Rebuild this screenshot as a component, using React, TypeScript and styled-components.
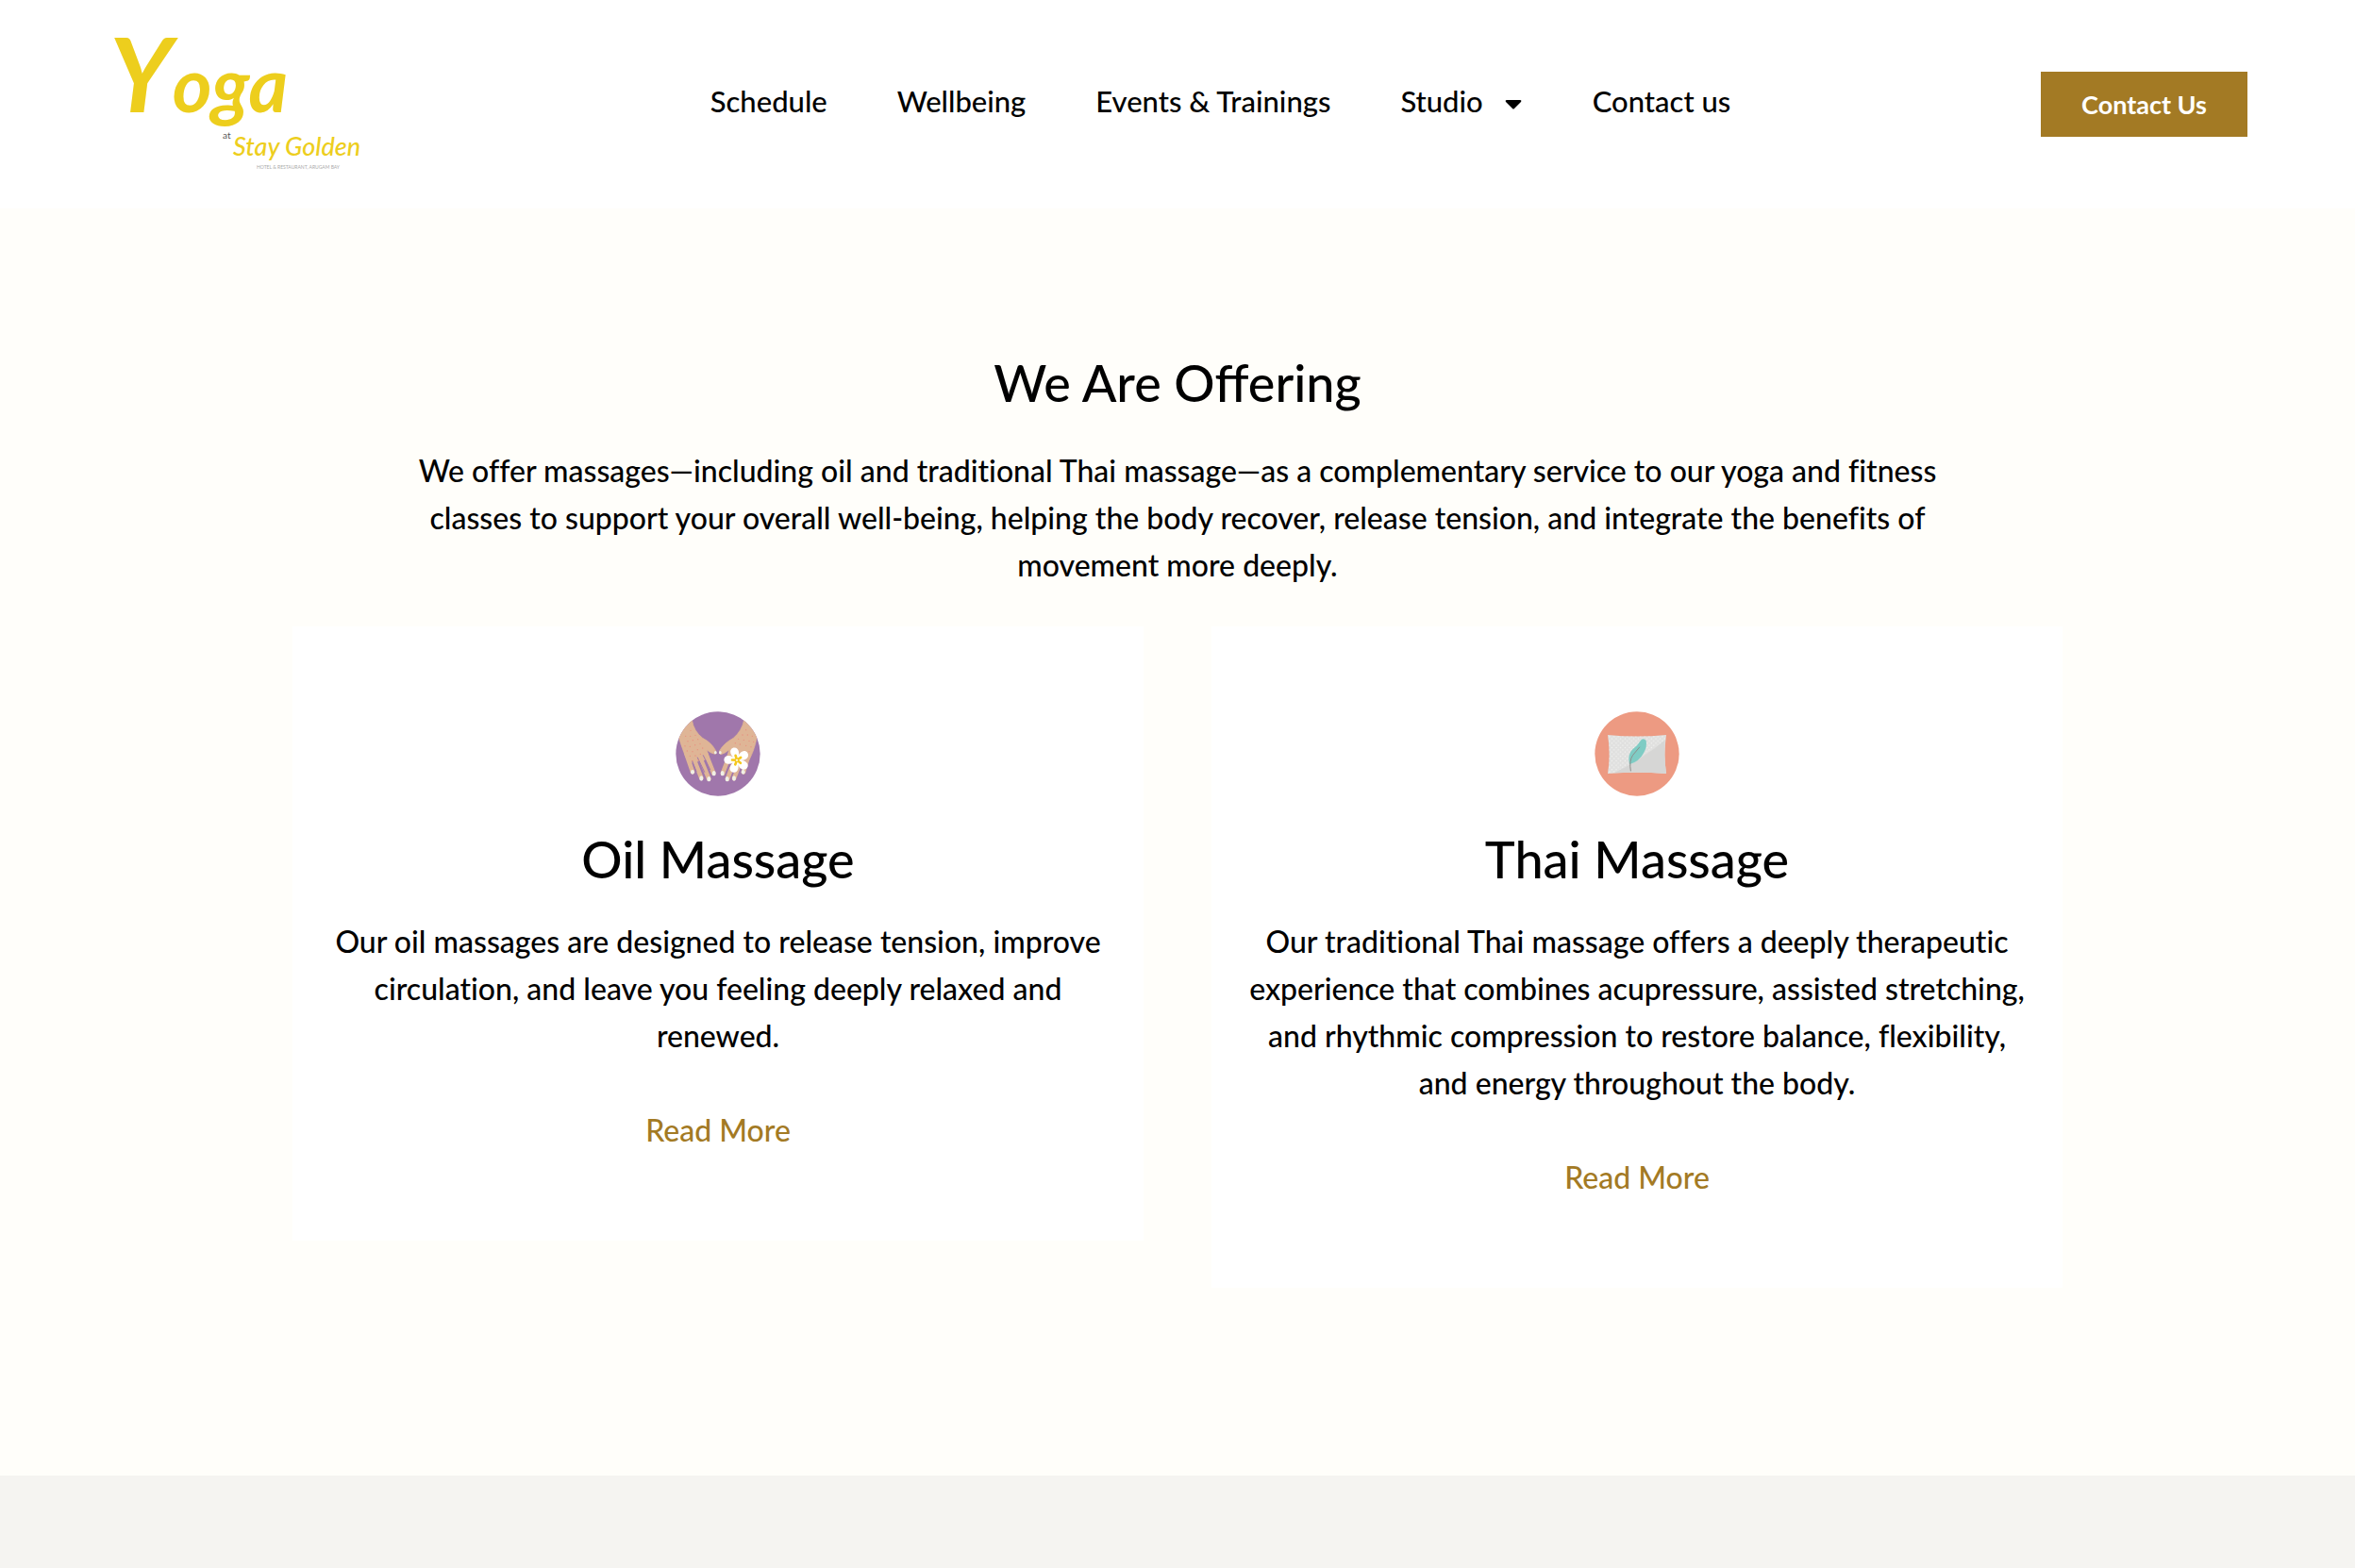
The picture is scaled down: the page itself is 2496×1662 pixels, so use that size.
import React from 'react';
import styled, { createGlobalStyle } from 'styled-components';

const GlobalStyle = createGlobalStyle`
  *, *::before, *::after { box-sizing: border-box; }
  body {
    margin: 0;
    background: #f5f4f1;
    color: #000;
    font-family: Lato, "Liberation Sans", sans-serif;
    font-weight: 500;
    font-size: 32px;
    line-height: 50px;
    font-variant-ligatures: no-common-ligatures;
  }
  h1, h2, p { margin: 0; }
  a { color: inherit; text-decoration: none; }
`;

const Header = styled.header`
  display: flex;
  align-items: center;
  justify-content: space-between;
  height: 221px;
  padding: 0 114px;
  background: #fff;
`;

const LogoLink = styled.a`
  display: block;
  width: 310px;

  svg { display: block; overflow: visible; }
`;

const Nav = styled.nav`
  display: flex;
  align-items: center;
  gap: 74px;
  padding-bottom: 8px;
  font-size: 31px;
  line-height: 40px;
`;

const NavToggle = styled.button`
  display: flex;
  align-items: center;
  gap: 22px;
  padding: 0;
  border: 0;
  background: none;
  color: inherit;
  font: inherit;
  cursor: pointer;

  svg { margin-top: 8px; }
`;

const ContactButton = styled.button`
  width: 219px;
  height: 69px;
  padding: 0;
  border: 0;
  background: #a37a24;
  color: #fff;
  font: inherit;
  font-size: 27px;
  font-weight: 700;
  cursor: pointer;
`;

const Offering = styled.main`
  padding: 153px 48px 199px;
  background: #fffefa;
  text-align: center;
`;

const Title = styled.h1`
  font-size: 54px;
  font-weight: 500;
  line-height: 64px;
  font-variant-ligatures: normal;
`;

const Intro = styled.p`
  max-width: 1680px;
  margin: 36px auto 0;
`;

const Cards = styled.div`
  display: grid;
  grid-template-columns: 1fr 1fr;
  align-items: start;
  gap: 72px;
  max-width: 1876px;
  margin: 40px auto 0;
`;

const Card = styled.article`
  padding: 89px 32px 92px;
  background: #fff;

  > svg { display: block; margin: 0 auto; }
`;

const CardTitle = styled.h2`
  margin-top: 34px;
  font-size: 54px;
  font-weight: 500;
  line-height: 64px;
`;

const CardText = styled.p`
  margin: 30px 0 50px;
`;

const ReadMore = styled.a`
  && { color: #a37a24; }
`;

const Wordmark = styled.text`
  fill: #edce1d;
  font-style: italic;
  font-weight: 700;
  font-size: 80px;
`;

const Tagline = styled.text`
  fill: #edce1d;
  font-style: italic;
  font-weight: 500;
  font-size: 27px;
`;

const SmallPrint = styled.text<{ $size: number; $color: string }>`
  fill: ${(p) => p.$color};
  font-weight: 400;
  font-size: ${(p) => p.$size}px;
`;

function Logo() {
  return (
    <svg width="272" height="160" viewBox="114 30 272 160" role="img" aria-label="Yoga at Stay Golden">
      <Wordmark x="116" y="118"><tspan fontSize="110">Y</tspan>oga</Wordmark>
      <SmallPrint x="236" y="146" $size={10} $color="#555">at</SmallPrint>
      <Tagline x="247" y="164">Stay Golden</Tagline>
      <SmallPrint x="272" y="178" $size={5} $color="#aaa">HOTEL &amp; RESTAURANT, ARUGAM BAY</SmallPrint>
    </svg>
  );
}

const leftFreckles = [
  [126, 132], [110, 150], [125, 150], [141, 147], [117, 166], [133, 163], [149, 160], [108, 181], [124, 183],
  [140, 178], [156, 174], [115, 197], [132, 199], [148, 193], [164, 188], [124, 213], [141, 212], [157, 207],
  [132, 228], [150, 226],
];

const rightFreckles = [
  [302, 130], [291, 146], [307, 146], [322, 150], [278, 159], [295, 162], [312, 165], [326, 168], [283, 176],
  [302, 180], [318, 184], [268, 172], [312, 199],
];

const petals = [0, 72, 144, 216, 288];

function HandsIcon() {
  return (
    <svg width="92" height="92" viewBox="75 68 276 276" aria-hidden="true">
      <defs>
        <clipPath id="hands-disc"><circle cx="213" cy="206" r="134" /></clipPath>
      </defs>
      <circle cx="213" cy="206" r="134" fill="#a077ab" />
      <g clipPath="url(#hands-disc)">
        <g fill="#dfb596" stroke="#dfb596" strokeLinecap="round" strokeLinejoin="round">
          <path d="M76 90 L130 98 Q136 134 164 156 Q192 170 206 196 Q210 206 203 207 Q190 204 177 194 L186 222 L120 236 Q104 206 90 160Z" strokeWidth="2" />
          <path d="M112 205 L132 263 M136 222 L160 283 M155 215 L184 286 M174 205 L199 268" strokeWidth="14" fill="none" />
          <path d="M350 90 L296 98 Q288 134 262 156 Q232 172 218 196 Q214 206 222 208 Q235 205 248 193 L240 224 L306 236 Q328 200 336 156Z" strokeWidth="2" />
          <path d="M250 210 L228 268 M268 220 L243 286 M288 222 L264 284 M316 190 L294 264" strokeWidth="14" fill="none" />
        </g>
        <g stroke="#a077ab" strokeWidth="3" strokeLinecap="round">
          <path d="M131 229 L144 262 M148 218 L170 264 M166 211 L188 256" />
          <path d="M258 232 L240 262" />
        </g>
        <g fill="#e98f7e">
          {leftFreckles.concat(rightFreckles).map(([x, y]) => <circle key={`${x}-${y}`} cx={x} cy={y} r="2" />)}
        </g>
        <g fill="#f0f0e6">
          <ellipse cx="132" cy="264" rx="6" ry="7" />
          <ellipse cx="160" cy="284" rx="6" ry="8" />
          <ellipse cx="184" cy="286" rx="6" ry="8" />
          <ellipse cx="200" cy="268" rx="6" ry="8" />
          <ellipse cx="205" cy="202" rx="4" ry="5" />
          <ellipse cx="220" cy="202" rx="4" ry="5" />
          <ellipse cx="227" cy="268" rx="6" ry="8" />
          <ellipse cx="242" cy="286" rx="6" ry="8" />
          <ellipse cx="264" cy="284" rx="6" ry="8" />
          <ellipse cx="293" cy="264" rx="6" ry="7" />
        </g>
      </g>
      {petals.map((angle) => (
        <g key={angle} transform={`rotate(${angle - 16} 273 226)`}>
          <path d="M273 226 C256 210 255 186 273 185 C291 186 290 210 273 226Z" fill="#fff" />
        </g>
      ))}
      {petals.map((angle) => (
        <path key={angle} d="M273 223 V211" transform={`rotate(${angle - 16} 273 226)`} stroke="#f5c81e" strokeWidth="8" strokeLinecap="round" />
      ))}
      <circle cx="273" cy="226" r="3" fill="#fff" />
    </svg>
  );
}

function PillowIcon() {
  return (
    <svg width="92" height="92" viewBox="72 68 276 276" aria-hidden="true">
      <defs>
        <pattern id="pillow-dots" width="14" height="14" patternUnits="userSpaceOnUse">
          <circle cx="4" cy="4" r="2" fill="#f5f5f3" />
          <circle cx="11" cy="11" r="2" fill="#f5f5f3" />
        </pattern>
      </defs>
      <circle cx="210" cy="206" r="134" fill="#ed9a82" />
      <path d="M117 146 Q210 155 303 146 Q294 208 303 269 Q210 262 117 269 Q127 208 117 146Z" fill="#e0e0df" />
      <path d="M117 146 Q210 155 303 146 L298 164 L140 267 L117 269 Q127 208 117 146Z" fill="url(#pillow-dots)" />
      <path d="M299 162 Q295 210 303 269 Q220 262 136 267 Q200 238 240 206 Q268 190 299 162Z" fill="#d6d6d5" />
      <path d="M186 240 Q179 208 196 192 Q211 181 222 163 Q231 154 239 164 Q243 184 231 204 Q218 230 186 240Z" fill="#7fccc4" />
      <path d="M190 260 Q184 228 197 210 L218 185" fill="none" stroke="#8e8f8c" strokeWidth="3" strokeLinecap="round" />
    </svg>
  );
}

export default function App() {
  return (
    <>
      <GlobalStyle />
      <Header>
        <LogoLink href="#"><Logo /></LogoLink>
        <Nav aria-label="Main">
          <a href="#schedule">Schedule</a>
          <a href="#wellbeing">Wellbeing</a>
          <a href="#events">Events &amp; Trainings</a>
          <NavToggle type="button" aria-haspopup="true">
            Studio
            <svg width="20" height="12" viewBox="0 0 20 12" aria-hidden="true">
              <path d="M3 1h14q2 0 1 2l-7 7q-1 1-2 0L2 3Q1 1 3 1z" />
            </svg>
          </NavToggle>
          <a href="#contact">Contact us</a>
        </Nav>
        <ContactButton type="button">Contact Us</ContactButton>
      </Header>
      <Offering>
        <Title>We Are Offering</Title>
        <Intro>
          We offer massages—including oil and traditional Thai massage—as a complementary service to our yoga and fitness
          classes to support your overall well-being, helping the body recover, release tension, and integrate the benefits of
          movement more deeply.
        </Intro>
        <Cards>
          <Card>
            <HandsIcon />
            <CardTitle>Oil Massage</CardTitle>
            <CardText>
              Our oil massages are designed to release tension, improve circulation, and leave you feeling deeply relaxed and
              renewed.
            </CardText>
            <ReadMore href="#oil">Read More</ReadMore>
          </Card>
          <Card>
            <PillowIcon />
            <CardTitle>Thai Massage</CardTitle>
            <CardText>
              Our traditional Thai massage offers a deeply therapeutic experience that combines acupressure, assisted
              stretching, and rhythmic compression to restore balance, flexibility, and energy throughout the body.
            </CardText>
            <ReadMore href="#thai">Read More</ReadMore>
          </Card>
        </Cards>
      </Offering>
    </>
  );
}
